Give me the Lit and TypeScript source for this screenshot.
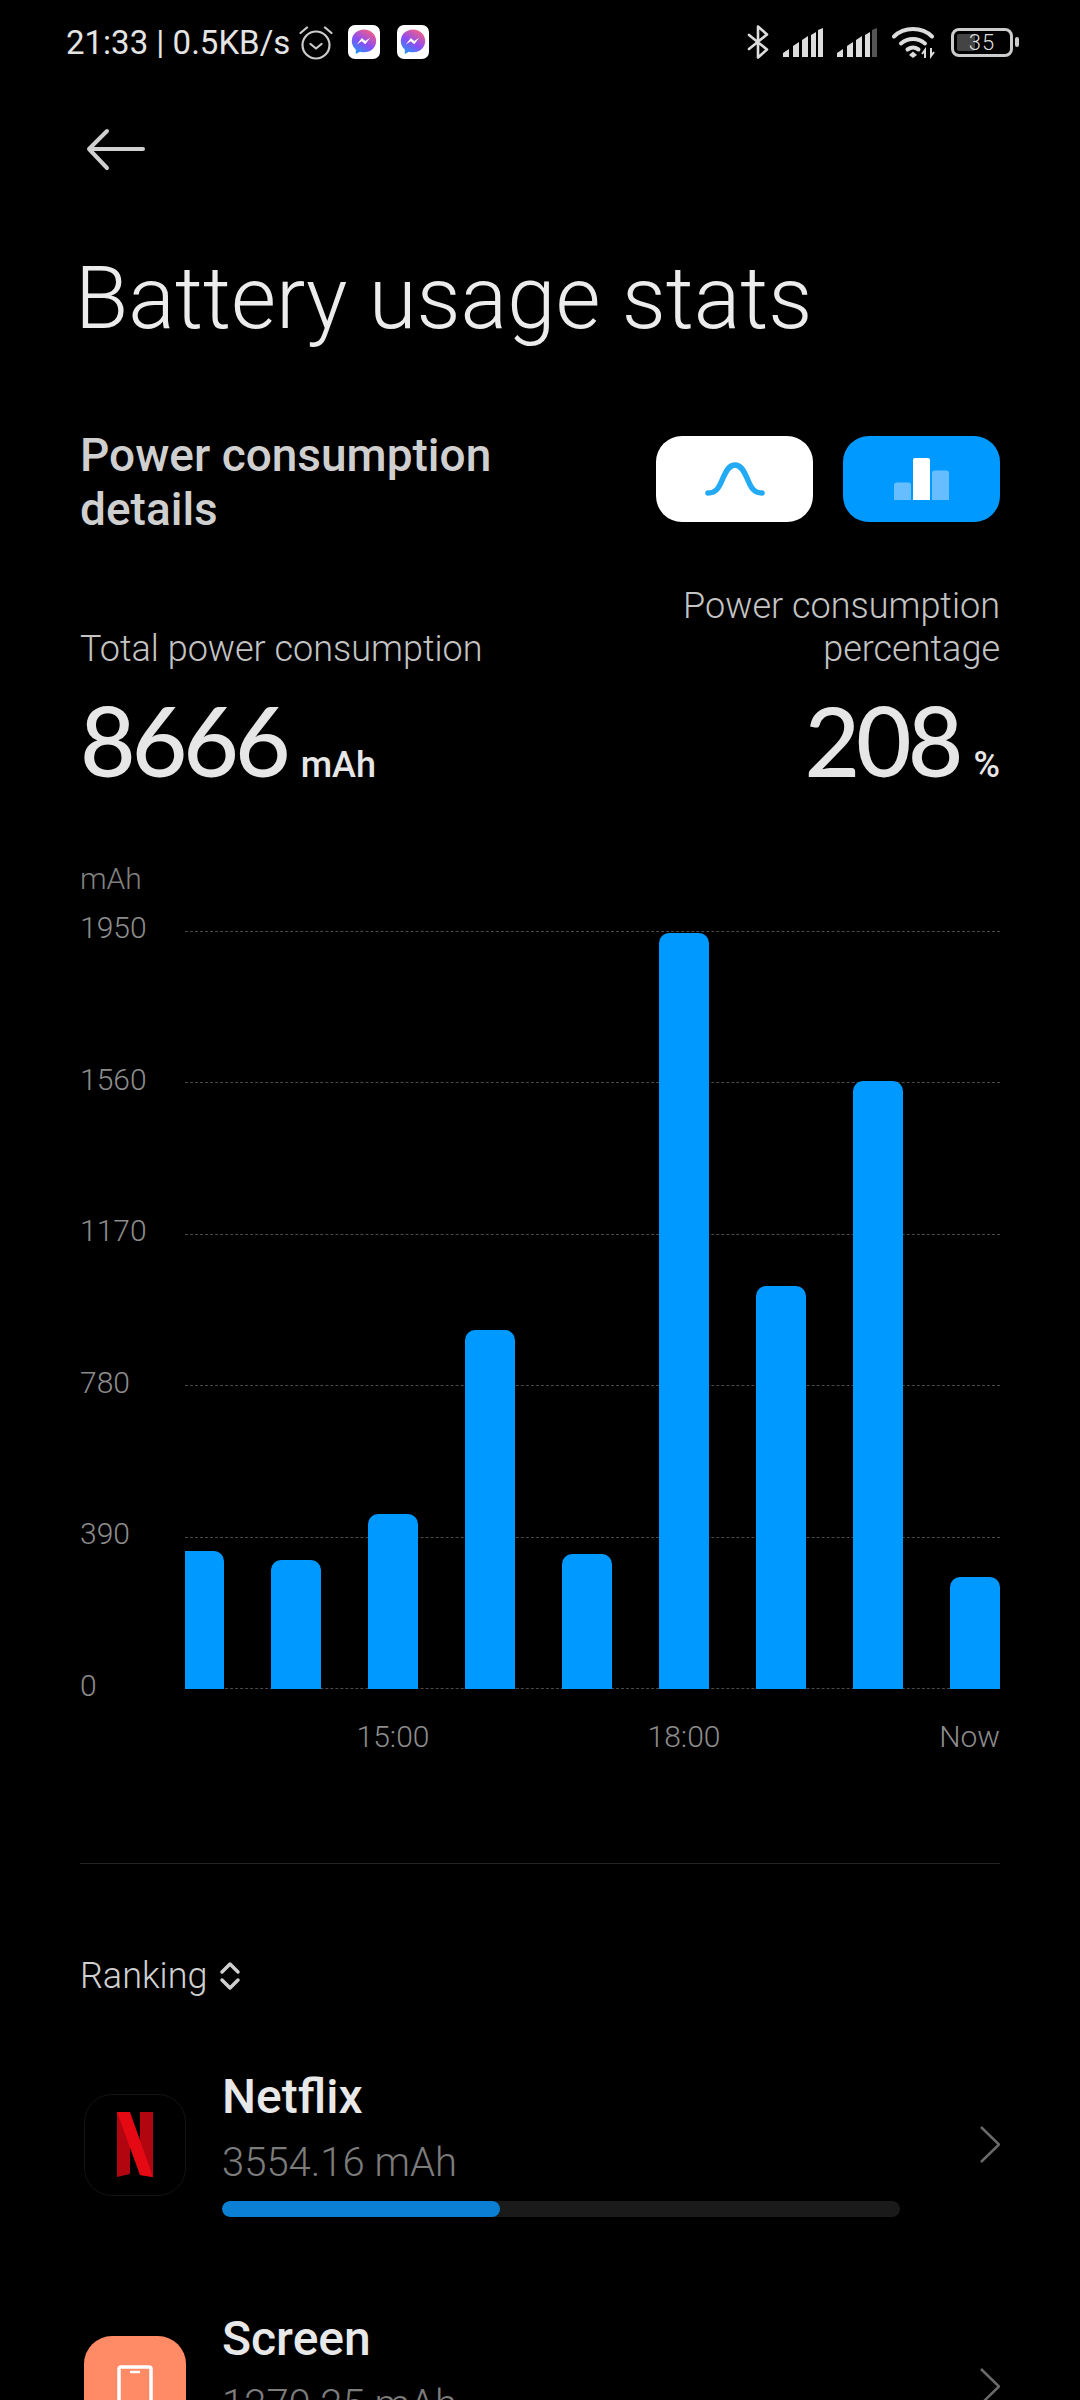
import { LitElement, html, css, svg } from "lit";
import { customElement } from "lit/decorators.js";

const SANS = css`"Roboto", "Liberation Sans", sans-serif`;

const BARS = [355, 332, 450, 924, 347, 1945, 1037, 1564, 288];
const AXIS = ["1950", "1560", "1170", "780", "390", "0"];
const TICKS: Record<number, string> = { 2: "15:00", 5: "18:00", 8: "Now" };
const PLOT_HEIGHT = 758;

const messenger = (id: string) => html`
  <svg class="msg" viewBox="0 0 32 34">
    <defs>
      <linearGradient id=${id} x1="0.2" y1="1" x2="0.8" y2="0">
        <stop offset="0" stop-color="#1f9bf5" />
        <stop offset="0.45" stop-color="#8a4df5" />
        <stop offset="1" stop-color="#fb5f7e" />
      </linearGradient>
    </defs>
    <rect width="32" height="34" rx="7" fill="#fff" />
    <path
      d="M16 4.500c-7 0-12.200 5-12.200 11.500 0 3.500 1.500 6.500 4 8.500v4.500l4.200-2.300c1.300.4 2.600.6 4 .6 7 0 12.200-5 12.200-11.300S23 4.500 16 4.500z"
      fill="url(#${id})"
    />
    <path d="M8.800 19.500l5-6.500 3.500 3 4.900-3.300-5 6.500-3.500-3z" fill="#fff" />
  </svg>
`;

const signal = (lastDim: boolean) => svg`
  <svg class="signal" viewBox="0 0 40 29">
    <path d="M0 29v-4l6-4v8z" fill="#ddd" />
    <path d="M10 29V18l6-4v15z" fill="#ddd" />
    <path d="M19 29V12l6-4v21z" fill="#ddd" />
    <path d="M28 29V7l5-3v25z" fill="#ddd" />
    <path d="M35 29V2l5-2v29z" fill=${lastDim ? "#555" : "#ddd"} />
  </svg>
`;

@customElement("app-root")
export class AppRoot extends LitElement {
  static styles = css`
    :host {
      display: block;
      height: 2400px;
      overflow: hidden;
      background: #000;
      font-family: ${SANS};
      color: #e6e6e6;
    }

    /* Status bar */

    .status {
      display: flex;
      align-items: center;
      justify-content: space-between;
      height: 84px;
      padding: 0 61px 0 66px;
    }
    .status__left,
    .status__right {
      display: flex;
      align-items: center;
    }
    .status__time {
      font-size: 33px;
      color: #e4e4e4;
      white-space: nowrap;
    }
    .alarm {
      width: 34px;
      height: 36px;
      margin-left: 9px;
    }
    .msg {
      width: 32px;
      height: 34px;
      margin-left: 15px;
    }
    .msg + .msg {
      margin-left: 17px;
    }
    .bt {
      width: 22px;
      height: 34px;
    }
    .signal {
      width: 40px;
      height: 29px;
      margin-left: 14px;
    }
    .wifi {
      width: 44px;
      height: 34px;
      margin-left: 15px;
    }
    .battery {
      position: relative;
      width: 62px;
      height: 29px;
      margin-left: 15px;
      box-sizing: border-box;
      border: 3px solid #ccc;
      border-radius: 8px;
      display: flex;
      align-items: center;
      justify-content: center;
      font-size: 22px;
      font-weight: 300;
      letter-spacing: 1px;
      color: #ddd;
    }
    .battery::before {
      content: "";
      position: absolute;
      left: 3px;
      top: 3px;
      bottom: 3px;
      width: 18px;
      background: #444;
      border-radius: 2px;
    }
    .battery span {
      position: relative;
    }
    .nub {
      width: 4px;
      height: 10px;
      margin-left: 2px;
      background: #ccc;
      border-radius: 2px;
    }

    /* Header */

    .back {
      display: block;
      width: 60px;
      height: 44px;
      margin: 44px 0 0 86px;
    }
    .title {
      margin: 74px 0 0 75px;
      font-size: 87px;
      line-height: 104px;
      font-weight: 300;
      color: #ececec;
      white-space: nowrap;
    }

    /* Details */

    .content {
      padding: 0 80px;
    }
    .details {
      display: flex;
      justify-content: space-between;
      align-items: center;
      margin-top: 78px;
    }
    .details__title {
      font-size: 46px;
      line-height: 54px;
      font-weight: 500;
      color: #cfcfcf;
    }
    .toggles {
      display: flex;
      gap: 30px;
      margin-bottom: 6px;
    }
    .toggle {
      width: 157px;
      height: 86px;
      border-radius: 26px;
      display: flex;
      align-items: center;
      justify-content: center;
      background: #fff;
    }
    .toggle--active {
      background: #0099ff;
    }
    .toggle__curve {
      width: 60px;
      height: 34px;
    }
    .toggle__bars {
      width: 55px;
      height: 42px;
    }

    /* Totals */

    .totals {
      display: flex;
      justify-content: space-between;
      align-items: flex-end;
      margin-top: 49px;
    }
    .total--right {
      text-align: right;
    }
    .total__label {
      font-size: 36px;
      line-height: 43px;
      font-weight: 300;
      color: #c4c4c4;
    }
    .total__value {
      display: flex;
      align-items: baseline;
      gap: 14px;
      margin-top: 21px;
      height: 96px;
    }
    .total--right .total__value {
      justify-content: flex-end;
    }
    .total__num {
      font-family: "Lato", ${SANS};
      font-size: 96px;
      font-weight: 500;
      line-height: 96px;
      letter-spacing: -4px;
      color: #e6e6e6;
    }
    .total__unit {
      font-size: 36px;
      font-weight: 500;
      color: #e6e6e6;
    }

    /* Chart */

    .chart {
      position: relative;
      margin-top: 73px;
    }
    .chart__unit {
      font-size: 30px;
      line-height: 36px;
      color: #808080;
      font-weight: 300;
    }
    .rows {
      display: flex;
      flex-direction: column;
      gap: 111.6px;
      margin-top: 14px;
    }
    .row {
      display: flex;
      align-items: center;
      height: 40px;
    }
    .row__label {
      width: 105px;
      padding-bottom: 6px;
      font-size: 30px;
      line-height: 32px;
      font-weight: 300;
      color: #8c8c8c;
    }
    .row__line {
      flex: 1;
      border-top: 1px dashed #4a4a4a;
    }
    .bars {
      position: absolute;
      left: 105px;
      right: 0;
      bottom: 20px;
      display: flex;
      justify-content: space-between;
      align-items: flex-end;
    }
    .bar {
      width: 50px;
      background: #0099ff;
      border-radius: 10px 10px 0 0;
    }
    .bar:first-child {
      width: 39px;
      border-top-left-radius: 0;
    }
    .ticks {
      display: flex;
      justify-content: space-between;
      margin: 10px 0 0 105px;
    }
    .tick {
      width: 50px;
      display: flex;
      justify-content: center;
      font-size: 30px;
      line-height: 36px;
      font-weight: 300;
      color: #8c8c8c;
      white-space: nowrap;
    }
    .tick:first-child {
      width: 39px;
    }
    .tick:last-child {
      justify-content: flex-end;
    }
    .divider {
      height: 1px;
      margin-top: 108px;
      background: #252525;
    }

    /* Ranking */

    .ranking {
      display: flex;
      align-items: center;
      gap: 12px;
      margin-top: 90px;
      font-size: 36px;
      line-height: 44px;
      font-weight: 300;
      color: #d0d0d0;
    }
    .ranking svg {
      width: 22px;
      height: 30px;
    }
    .list {
      display: flex;
      flex-direction: column;
      gap: 26px;
      margin-top: 62px;
    }
    .item {
      display: flex;
      align-items: flex-start;
      height: 216px;
    }
    .item__icon {
      flex: none;
      width: 102px;
      height: 102px;
      margin: 34px 0 0 4px;
      border-radius: 28px;
      box-sizing: border-box;
      display: flex;
      align-items: flex-start;
      justify-content: center;
    }
    .item__icon--netflix {
      border: 1px solid #141414;
      align-items: center;
    }
    .item__icon--screen {
      background: #ff8a66;
      padding-top: 29px;
    }
    .item__body {
      flex: 1;
      margin-left: 36px;
      padding-top: 10px;
    }
    .item__name {
      font-size: 48px;
      line-height: 54px;
      font-weight: 500;
      color: #e8e8e8;
    }
    .item__value {
      margin-top: 16px;
      font-size: 40px;
      line-height: 46px;
      font-weight: 300;
      color: #7c7c7c;
    }
    .item__track {
      width: 678px;
      height: 16px;
      margin-top: 15px;
      border-radius: 8px;
      background: #1a1a1a;
      overflow: hidden;
    }
    .item__fill {
      height: 100%;
      border-radius: 8px;
      background: #0a7fd4;
    }
    .item__chevron {
      flex: none;
      width: 20px;
      height: 37px;
      margin-top: 66px;
    }
  `;

  render() {
    return html`
      <div class="status">
        <div class="status__left">
          <span class="status__time">21:33 | 0.5KB/s</span>
          <svg class="alarm" viewBox="0 0 34 36" fill="none" stroke="#ccc" stroke-width="2.200" stroke-linecap="round" stroke-linejoin="round">
            <circle cx="17" cy="21" r="13.500" />
            <path d="M11.500 20l5.500 4.500 5.500-4.500" />
            <path d="M1.500 9L8 3.500M32.500 9L26 3.500" />
          </svg>
          ${messenger("mg1")} ${messenger("mg2")}
        </div>
        <div class="status__right">
          <svg class="bt" viewBox="0 0 22 34" fill="none" stroke="#ddd" stroke-width="2.600" stroke-linejoin="round" stroke-linecap="round">
            <path d="M2 10l18 14.500-9 8V1.500l9 8L2 24" />
          </svg>
          ${signal(false)} ${signal(true)}
          <svg class="wifi" viewBox="0 0 44 34" fill="none" stroke="#ddd" stroke-width="4" stroke-linecap="round">
            <path d="M2 11.500C12 1.500 30 1.500 40 11.500" />
            <path d="M9 18.500c7-6 17-6 24 0" />
            <path d="M15.500 24.500c3.500-2.500 7.500-2.500 11 0" />
            <path d="M17 30l4-3.500 4 3.500-4 3z" fill="#ddd" stroke="none" />
            <path d="M33 33v-8l-3 4M39 23v8l3-4" stroke-width="2" stroke-linecap="butt" />
          </svg>
          <div class="battery"><span>35</span></div>
          <div class="nub"></div>
        </div>
      </div>

      <svg class="back" viewBox="0 0 60 44" fill="none" stroke="#d0d0d0" stroke-width="4" stroke-linecap="round" stroke-linejoin="round">
        <path d="M21 3L3 21l18 19M3 21h54" />
      </svg>
      <div class="title">Battery usage stats</div>

      <div class="content">
        <div class="details">
          <div class="details__title">Power consumption<br />details</div>
          <div class="toggles">
            <div class="toggle">
              <svg class="toggle__curve" viewBox="0 0 60 34" fill="none" stroke="#22aaf5" stroke-width="5.500" stroke-linecap="round">
                <path d="M3 31c8 0 11-5 15-15 4-9 7-13 12-13s8 4 12 13c4 10 7 15 15 15" />
              </svg>
            </div>
            <div class="toggle toggle--active">
              <svg class="toggle__bars" viewBox="0 0 55 42">
                <path d="M0 42V27q0-2.500 2.500-2.500h12q2.500 0 2.500 2.500v15z" fill="#66bdff" />
                <path d="M19 42V2q0-2 2-2h13q2 0 2 2v40z" fill="#fff" />
                <path d="M38 42V15q0-2.500 2.500-2.500h12q2.500 0 2.500 2.500v27z" fill="#66bdff" />
              </svg>
            </div>
          </div>
        </div>

        <div class="totals">
          <div class="total">
            <div class="total__label">Total power consumption</div>
            <div class="total__value">
              <span class="total__num">8666</span><span class="total__unit">mAh</span>
            </div>
          </div>
          <div class="total total--right">
            <div class="total__label">Power consumption<br />percentage</div>
            <div class="total__value">
              <span class="total__num">208</span><span class="total__unit">%</span>
            </div>
          </div>
        </div>

        <div class="chart">
          <div class="chart__unit">mAh</div>
          <div class="rows">
            ${AXIS.map(
              (label) => html`
                <div class="row">
                  <span class="row__label">${label}</span>
                  <span class="row__line"></span>
                </div>
              `
            )}
          </div>
          <div class="bars">
            ${BARS.map(
              (value) => html`<div class="bar" style="height:${(value / 1950) * PLOT_HEIGHT}px"></div>`
            )}
          </div>
        </div>
        <div class="ticks">
          ${BARS.map((_, i) => html`<span class="tick">${TICKS[i] ?? ""}</span>`)}
        </div>
        <div class="divider"></div>

        <div class="ranking">
          <span>Ranking</span>
          <svg viewBox="0 0 22 30" fill="none" stroke="#d0d0d0" stroke-width="3.500" stroke-linecap="round" stroke-linejoin="round">
            <path d="M3 11l8-8 8 8M3 19l8 8 8-8" />
          </svg>
        </div>

        <div class="list">
          <div class="item">
            <div class="item__icon item__icon--netflix">
              <svg width="38" height="66" viewBox="0 0 38 66">
                <path d="M1 0h13v62L1 65z" fill="#b1060f" />
                <path d="M24 0h13v65l-13-2z" fill="#b1060f" />
                <path d="M1 0h13l23 65-13-2z" fill="#e50914" />
              </svg>
            </div>
            <div class="item__body">
              <div class="item__name">Netflix</div>
              <div class="item__value">3554.16 mAh</div>
              <div class="item__track"><div class="item__fill" style="width:41%"></div></div>
            </div>
            ${this.chevron()}
          </div>
          <div class="item">
            <div class="item__icon item__icon--screen">
              <svg width="36" height="80" viewBox="0 0 36 80" fill="none" stroke="#fff">
                <rect x="2" y="2" width="32" height="76" rx="2" stroke-width="3.500" />
                <path d="M14 7h8" stroke-width="2.500" stroke-linecap="round" />
              </svg>
            </div>
            <div class="item__body">
              <div class="item__name">Screen</div>
              <div class="item__value">1270.25 mAh</div>
            </div>
            ${this.chevron()}
          </div>
        </div>
      </div>
    `;
  }

  private chevron() {
    return html`
      <svg class="item__chevron" viewBox="0 0 20 37" fill="none" stroke="#6a6a6a" stroke-width="2.500">
        <path d="M1 1l18 17.500L1 36" />
      </svg>
    `;
  }
}
